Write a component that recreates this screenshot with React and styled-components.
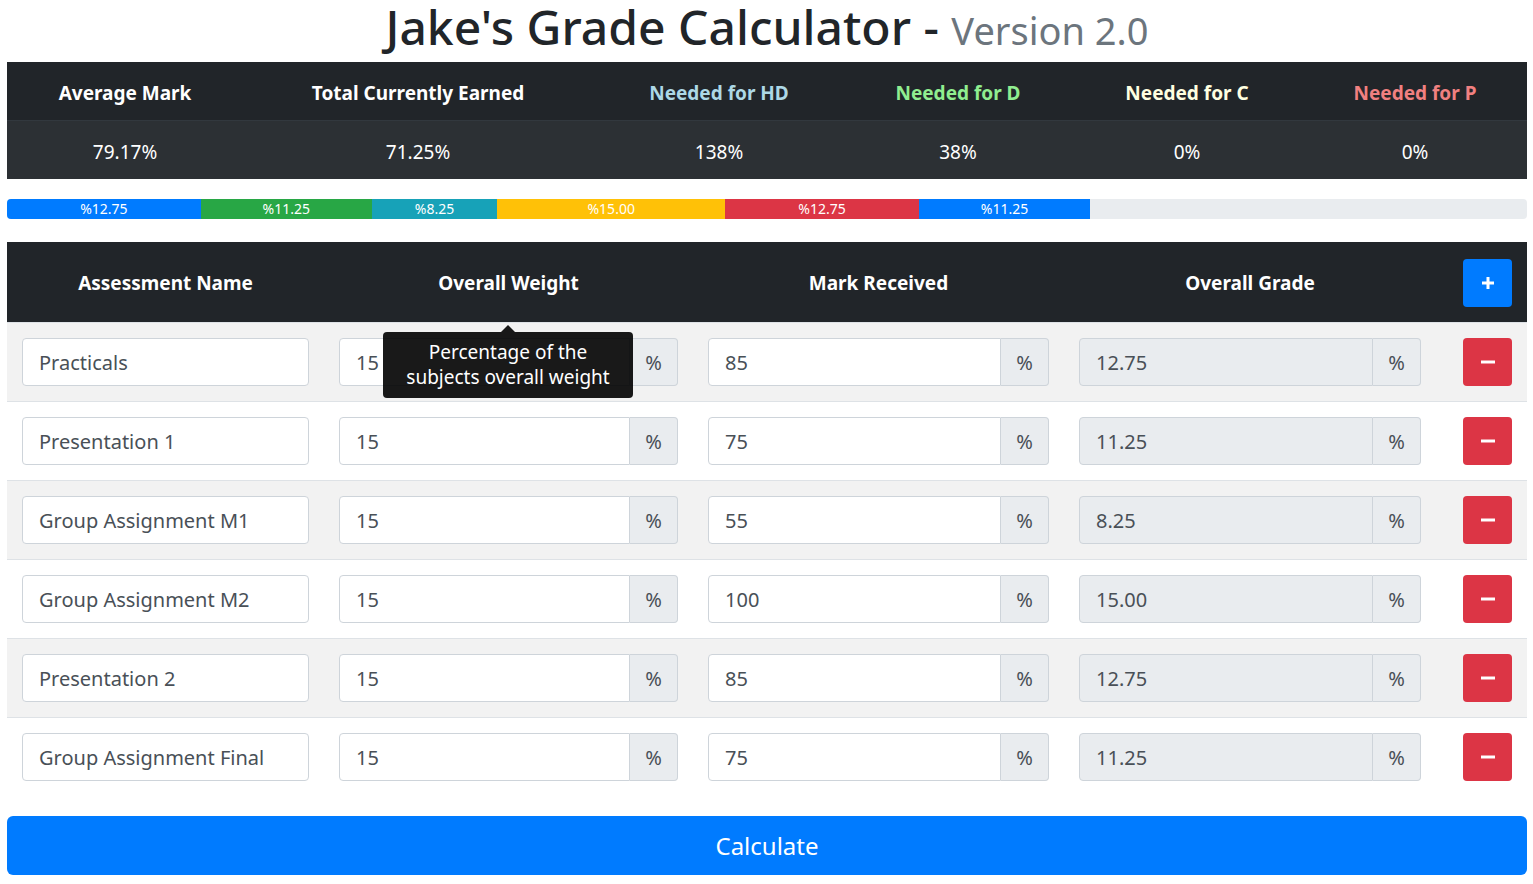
import React from 'react'
import styled, { createGlobalStyle } from 'styled-components'

const GlobalStyle = createGlobalStyle`
  body {
    margin: 0;
    background: #fff;
    font-family: "Segoe UI", "Noto Sans", "Open Sans", sans-serif;
    color: #212529;
  }
  * { box-sizing: border-box; }
`

const stats = [
  { label: 'Average Mark', value: '79.17%', color: '#fff' },
  { label: 'Total Currently Earned', value: '71.25%', color: '#fff' },
  { label: 'Needed for HD', value: '138%', color: '#add8e6' },
  { label: 'Needed for D', value: '38%', color: '#90ee90' },
  { label: 'Needed for C', value: '0%', color: '#ffffe0' },
  { label: 'Needed for P', value: '0%', color: '#f08080' },
]

const bars = [
  { w: 12.75, color: '#007bff' },
  { w: 11.25, color: '#28a745' },
  { w: 8.25, color: '#17a2b8' },
  { w: 15.0, color: '#ffc107' },
  { w: 12.75, color: '#dc3545' },
  { w: 11.25, color: '#007bff' },
]

const rows = [
  { name: 'Practicals', weight: '15', mark: '85', grade: '12.75' },
  { name: 'Presentation 1', weight: '15', mark: '75', grade: '11.25' },
  { name: 'Group Assignment M1', weight: '15', mark: '55', grade: '8.25' },
  { name: 'Group Assignment M2', weight: '15', mark: '100', grade: '15.00' },
  { name: 'Presentation 2', weight: '15', mark: '85', grade: '12.75' },
  { name: 'Group Assignment Final', weight: '15', mark: '75', grade: '11.25' },
]

export default function App() {
  return (
    <>
      <GlobalStyle />
      <Page>
        <Title>
          Jake's Grade Calculator - <Muted>Version 2.0</Muted>
        </Title>

        <StatsTable>
          {stats.map((s) => (
            <StatHead key={s.label} color={s.color}>{s.label}</StatHead>
          ))}
          {stats.map((s) => (
            <StatValue key={s.label}>{s.value}</StatValue>
          ))}
        </StatsTable>

        <Progress>
          {bars.map((b, i) => (
            <Bar key={i} color={b.color} style={{ width: b.w + '%' }}>
              %{b.w.toFixed(2)}
            </Bar>
          ))}
        </Progress>

        <Grid>
          <HeadCell>Assessment Name</HeadCell>
          <HeadCell>Overall Weight</HeadCell>
          <HeadCell>Mark Received</HeadCell>
          <HeadCell>Overall Grade</HeadCell>
          <HeadCell align="right">
            <IconButton variant="add" aria-label="add">
              <svg width="16" height="16" viewBox="0 0 16 16">
                <path d="M8 2v12M2 8h12" stroke="#fff" strokeWidth="3" />
              </svg>
            </IconButton>
          </HeadCell>

          {rows.map((r, i) => (
            <React.Fragment key={r.name}>
              <Cell striped={i % 2 === 0}>
                <TextInput defaultValue={r.name} />
              </Cell>
              <Cell striped={i % 2 === 0}>
                <InputGroup>
                  <GroupInput defaultValue={r.weight} />
                  <Addon>%</Addon>
                </InputGroup>
                {i === 0 && (
                  <Tooltip>
                    Percentage of the
                    <br />
                    subjects overall weight
                  </Tooltip>
                )}
              </Cell>
              <Cell striped={i % 2 === 0}>
                <InputGroup>
                  <GroupInput defaultValue={r.mark} />
                  <Addon>%</Addon>
                </InputGroup>
              </Cell>
              <Cell striped={i % 2 === 0}>
                <InputGroup>
                  <GroupInput defaultValue={r.grade} disabled />
                  <Addon>%</Addon>
                </InputGroup>
              </Cell>
              <Cell striped={i % 2 === 0} align="right">
                <IconButton variant="remove" aria-label="remove">
                  <svg width="16" height="16" viewBox="0 0 16 16">
                    <path d="M1 8h14" stroke="#fff" strokeWidth="3" />
                  </svg>
                </IconButton>
              </Cell>
            </React.Fragment>
          ))}
        </Grid>

        <CalcButton>Calculate</CalcButton>
      </Page>
    </>
  )
}

const Page = styled.div`
  padding: 0 6px 9px 7px;
`

const Title = styled.h1`
  margin: 0 0 8px;
  height: 54px;
  padding-top: 2px;
  text-align: center;
  font-size: 48px;
  font-weight: 500;
  line-height: 50px;
  color: #212529;
`

const Muted = styled.small`
  font-size: 38px;
  font-weight: 400;
  line-height: 1;
  color: #6c757d;
`

const StatsTable = styled.div`
  display: grid;
  grid-template-columns: 236px 350px 252px 226px 232px 1fr;
  background: #212529;
`

const StatHead = styled.div`
  height: 59px;
  padding-top: 4px;
  display: flex;
  align-items: center;
  justify-content: center;
  font-size: 19px;
  font-weight: 700;
  color: ${(p) => p.color};
  border-bottom: 1px solid #32383e;
`

const StatValue = styled.div`
  height: 58px;
  padding-top: 4px;
  display: flex;
  align-items: center;
  justify-content: center;
  font-size: 19px;
  color: #fff;
  background: #2c3034;
`

const Progress = styled.div`
  display: flex;
  height: 20px;
  margin: 20px 0 23px;
  background: #e9ecef;
  border-radius: 4px;
  overflow: hidden;
`

const Bar = styled.div`
  background: ${(p) => p.color};
  color: #fff;
  font-size: 14px;
  line-height: 20px;
  text-align: center;
`

const Grid = styled.div`
  display: grid;
  grid-template-columns: 317px 369px 371px 372px 1fr;
`

const HeadCell = styled.div`
  height: 80px;
  padding: 2px 15px 0;
  background: #212529;
  color: #fff;
  font-size: 19px;
  font-weight: 700;
  display: flex;
  align-items: center;
  justify-content: ${(p) => (p.align === 'right' ? 'flex-end' : 'center')};
`

const Cell = styled.div`
  position: relative;
  height: 79px;
  border-top: 1px solid #dee2e6;
  background: ${(p) => (p.striped ? '#f2f2f2' : '#fff')};
  padding: 15px;
  display: flex;
  justify-content: ${(p) => (p.align === 'right' ? 'flex-end' : 'stretch')};
`

const TextInput = styled.input`
  width: 100%;
  height: 48px;
  padding: 0 16px;
  font-family: inherit;
  font-size: 20px;
  color: #495057;
  background: #fff;
  border: 1px solid #ced4da;
  border-radius: 4px;
  outline: none;
`

const InputGroup = styled.div`
  display: flex;
  width: 100%;
  height: 48px;
`

const GroupInput = styled.input`
  flex: 1;
  min-width: 0;
  height: 48px;
  padding: 0 16px;
  font-family: inherit;
  font-size: 20px;
  color: #495057;
  background: #fff;
  border: 1px solid #ced4da;
  border-radius: 4px 0 0 4px;
  outline: none;
  &:disabled {
    background: #e9ecef;
    color: #495057;
    opacity: 1;
  }
`

const Addon = styled.span`
  width: 48px;
  display: flex;
  align-items: center;
  justify-content: center;
  font-size: 20px;
  color: #495057;
  background: #e9ecef;
  border: 1px solid #ced4da;
  border-left: none;
  border-radius: 0 4px 4px 0;
`

const IconButton = styled.button`
  width: 49px;
  height: 48px;
  border: none;
  border-radius: 4px;
  background: ${(p) => (p.variant === 'add' ? '#007bff' : '#dc3545')};
  display: flex;
  align-items: center;
  justify-content: center;
  padding: 0;
`

const Tooltip = styled.div`
  position: absolute;
  top: 9px;
  left: 59px;
  width: 250px;
  padding: 8px 10px;
  background: rgba(0, 0, 0, 0.9);
  color: #fff;
  font-size: 19px;
  line-height: 25px;
  text-align: center;
  border-radius: 4px;
  z-index: 2;
  &::before {
    content: '';
    position: absolute;
    top: -7px;
    left: 50%;
    margin-left: -7px;
    border-width: 0 7px 7px;
    border-style: solid;
    border-color: transparent transparent rgba(0, 0, 0, 0.9);
  }
`

const CalcButton = styled.button`
  display: block;
  width: 100%;
  height: 59px;
  margin-top: 20px;
  border: none;
  border-radius: 6px;
  background: #007bff;
  color: #fff;
  font-family: inherit;
  font-size: 24px;
`
